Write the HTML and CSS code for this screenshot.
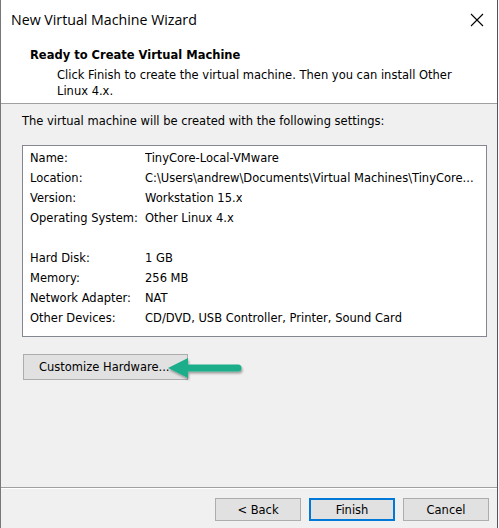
FILE: index.html
```html
<!DOCTYPE html>
<html>
<head>
<meta charset="utf-8">
<link rel="stylesheet" href="styles.css">
</head>
<body>
<div class="window">
  <div class="titlebar">
    <span class="title">New Virtual Machine Wizard</span>
    <svg class="close" width="14" height="14" viewBox="0 0 14 14"><path d="M1 1 L13 13 M13 1 L1 13" stroke="#000" stroke-width="1.1" fill="none"/></svg>
  </div>
  <div class="header">
    <div class="h-title">Ready to Create Virtual Machine</div>
    <div class="h-desc">Click Finish to create the virtual machine. Then you can install Other Linux 4.x.</div>
  </div>
  <div class="content">
    <div class="intro">The virtual machine will be created with the following settings:</div>
    <div class="settings">
      <div class="row"><span class="label">Name:</span><span class="value">TinyCore-Local-VMware</span></div>
      <div class="row"><span class="label">Location:</span><span class="value">C:\Users\andrew\Documents\Virtual Machines\TinyCore...</span></div>
      <div class="row"><span class="label">Version:</span><span class="value">Workstation 15.x</span></div>
      <div class="row"><span class="label">Operating System:</span><span class="value">Other Linux 4.x</span></div>
      <div class="row"></div>
      <div class="row"><span class="label">Hard Disk:</span><span class="value">1 GB</span></div>
      <div class="row"><span class="label">Memory:</span><span class="value">256 MB</span></div>
      <div class="row"><span class="label">Network Adapter:</span><span class="value">NAT</span></div>
      <div class="row"><span class="label">Other Devices:</span><span class="value">CD/DVD, USB Controller, Printer, Sound Card</span></div>
    </div>
    <div class="custom-wrap">
      <button class="btn custom">Customize Hardware...</button>
      <svg class="arrow" width="84" height="30" viewBox="0 0 84 30">
        <defs>
          <filter id="sh" x="-20%" y="-40%" width="140%" height="180%">
            <feDropShadow dx="1" dy="2" stdDeviation="1.3" flood-color="#000" flood-opacity="0.35"/>
          </filter>
        </defs>
        <g filter="url(#sh)">
          <path d="M4 14 L24 4 L24 24 Z" fill="#1aae8a"/>
          <line x1="22" y1="14" x2="74" y2="14" stroke="#1aae8a" stroke-width="7" stroke-linecap="round"/>
        </g>
      </svg>
    </div>
  </div>
  <div class="footer">
    <button class="btn">&lt; Back</button>
    <button class="btn primary">Finish</button>
    <button class="btn">Cancel</button>
  </div>
</div>
</body>
</html>
```
FILE: styles.css
```css
html, body {
  margin: 0;
  padding: 0;
  background: #ffffff;
}
body {
  font-family: "DejaVu Sans", "Liberation Sans", sans-serif;
  font-size: 11.5px;
  color: #000;
}
.window {
  width: 496px;
  height: 528px;
  border-left: 1px solid #777777;
  border-right: 1px solid #555555;
  display: flex;
  flex-direction: column;
  background: #f0f0f0;
}
.titlebar {
  height: 40px;
  background: #fff;
  display: flex;
  align-items: center;
  justify-content: space-between;
  padding-left: 10px;
  padding-right: 13px;
  flex-shrink: 0;
}
.title {
  font-family: "Open Sans", "Noto Sans", sans-serif;
  font-size: 14.2px;
  color: #000;
  position: relative;
  top: -1px;
}
.close {
  display: block;
}
.header {
  background: #fff;
  padding: 7px 40px 4px 29px;
  border-bottom: 1px solid #a0a0a0;
  flex-shrink: 0;
  line-height: 16px;
}
.h-title {
  font-weight: bold;
}
.h-desc {
  margin-top: 4px;
  padding-left: 27px;
}
.content {
  flex: 1;
  padding: 9px 0 0 21px;
  line-height: 16px;
}
.settings {
  margin-top: 16px;
  width: 463px;
  background: #fff;
  border: 1px solid #828790;
  padding: 2px 0 8px 0;
}
.row {
  height: 20px;
  line-height: 20px;
  display: flex;
  white-space: nowrap;
}
.label {
  width: 115px;
  padding-left: 7px;
  flex-shrink: 0;
}
.value {
  overflow: hidden;
}
.custom-wrap {
  position: relative;
  margin-top: 17px;
  margin-left: 1px;
  height: 26px;
}
.btn {
  font-family: "DejaVu Sans", "Liberation Sans", sans-serif;
  font-size: 11.5px;
  color: #000;
  background: #e1e1e1;
  border: 1px solid #adadad;
  width: 86px;
  height: 23px;
  padding: 0;
  margin: 0;
  box-sizing: border-box;
}
.custom {
  width: 165px;
  height: 26px;
  text-align: left;
  padding-left: 15px;
}
.arrow {
  position: absolute;
  left: 141px;
  top: 0px;
}
.footer {
  flex-shrink: 0;
  border-top: 1px solid #a0a0a0;
  box-shadow: inset 0 1px 0 #ffffff;
  height: 41px;
  display: flex;
  justify-content: flex-end;
  gap: 8px;
  padding: 10px 8px 0 0;
  box-sizing: border-box;
}
.primary {
  border: 2px solid #0078d7;
}
```
